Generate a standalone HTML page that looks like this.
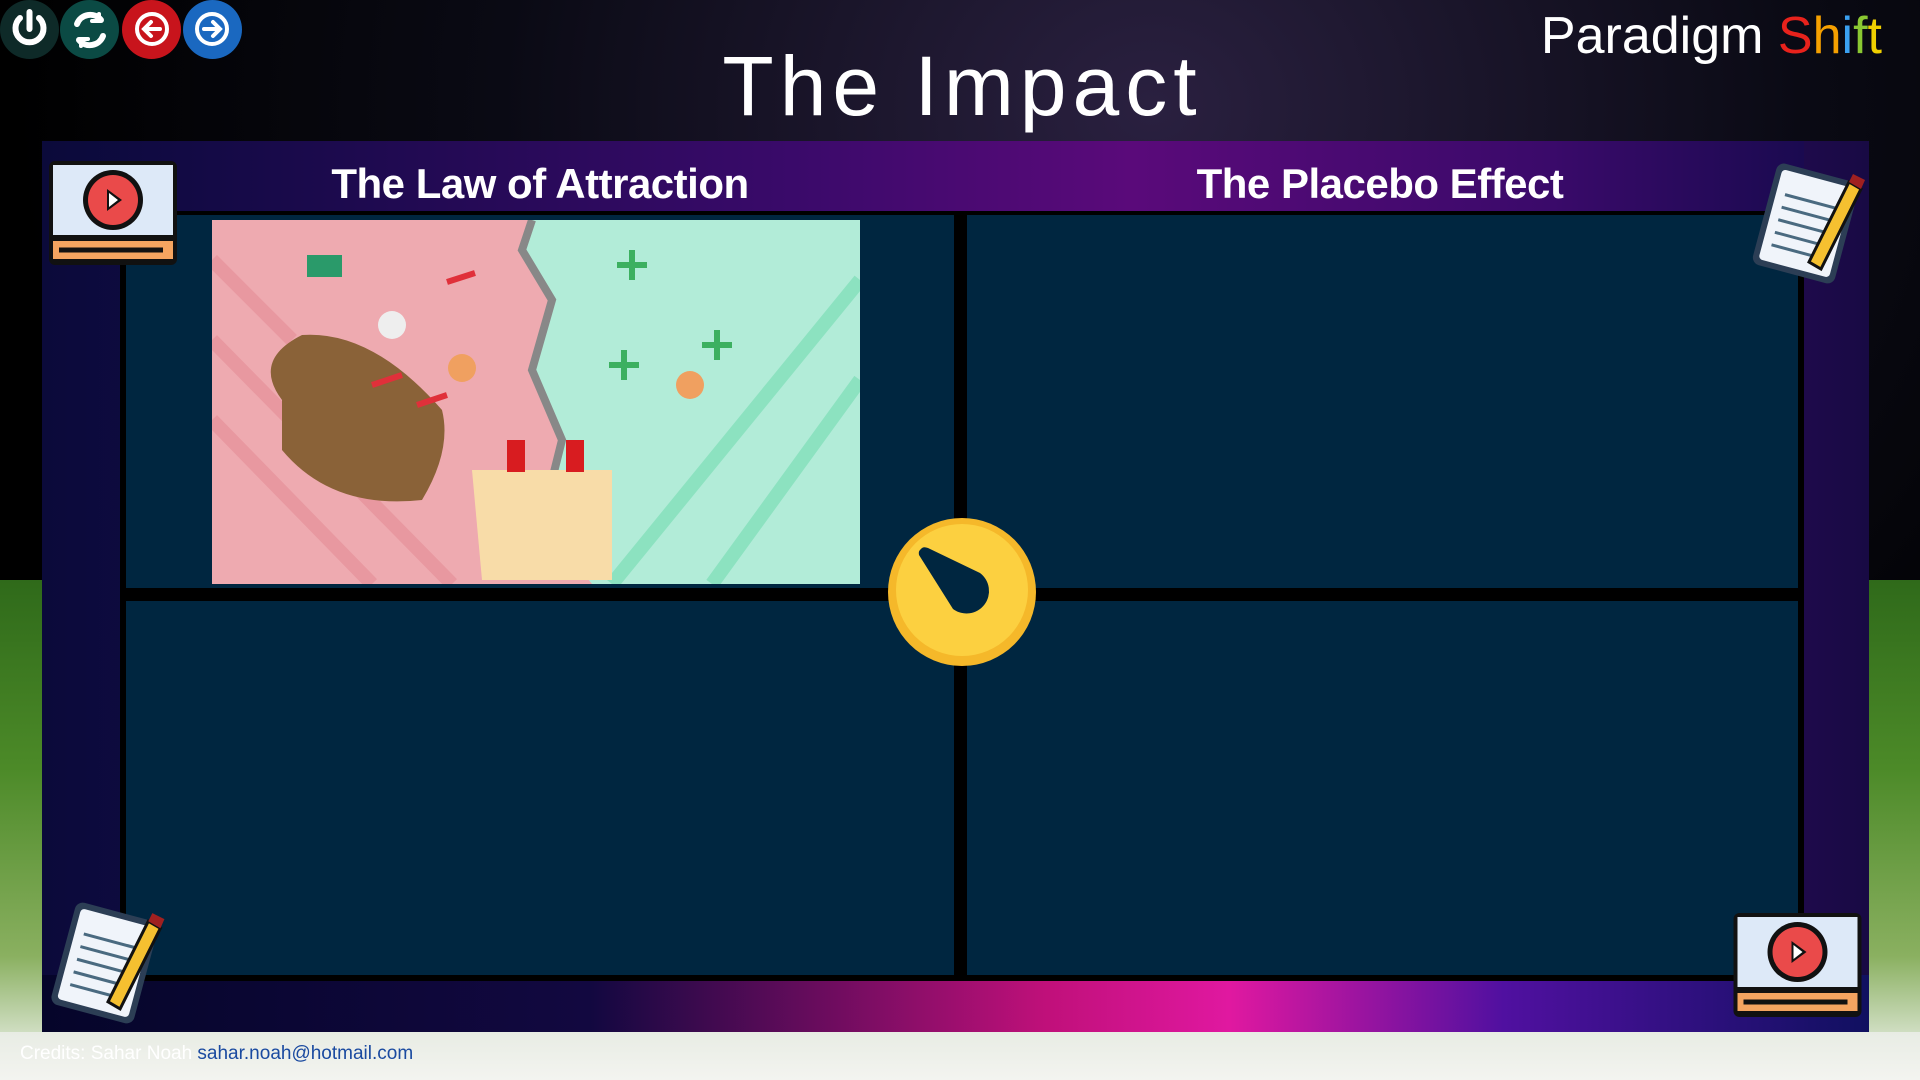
<!DOCTYPE html>
<html><head><meta charset="utf-8"><style>
*{margin:0;padding:0;box-sizing:border-box}
body{width:1920px;height:1080px;overflow:hidden;position:relative;font-family:"Liberation Sans",sans-serif;
background:radial-gradient(ellipse at 60% 10%,#2a2040 0%,#0a0a14 40%,#000 70%);}
.abs{position:absolute}
.grass{position:absolute;top:580px;height:470px;background:linear-gradient(180deg,#2f6a1a,#4c8a28 40%,#8ab060 80%,#dfe8d8)}
.bottom{position:absolute;left:0;top:1032px;width:1920px;height:48px;background:linear-gradient(180deg,#e8ece4,#f3f4f0)}
.frame{left:42px;top:141px;width:1827px;height:891px;background:linear-gradient(90deg,#0b0a3a 0%,#1a0f5a 30%,#4a0c78 55%,#3a0a6a 80%,#180a44 100%)}
.floor{left:42px;top:975px;width:1827px;height:57px;background:linear-gradient(90deg,#05052a 0%,#120840 30%,#c0107a 55%,#e018a0 65%,#5010a0 80%,#101060 100%)}
.blk{background:#000}
.panel{background:#002640}
h2{position:absolute;color:#fff;font-weight:bold;font-size:42px;top:160px;text-align:center;width:700px;letter-spacing:-0.5px}
.btn{position:absolute;top:0;width:59px;height:59px;border-radius:50%}
</style></head><body>
<div class="grass" style="left:0;width:60px"></div>
<div class="grass" style="left:1860px;width:60px"></div>
<div class="bottom"></div>
<div class="abs frame"></div>
<div class="abs floor"></div>
<div class="abs blk" style="left:120px;top:210px;width:1684px;height:771px"></div>
<div class="abs panel" style="left:126px;top:215px;width:828px;height:373px"></div>
<div class="abs panel" style="left:967px;top:215px;width:831px;height:373px"></div>
<div class="abs panel" style="left:126px;top:601px;width:828px;height:374px"></div>
<div class="abs panel" style="left:967px;top:601px;width:831px;height:374px"></div>
<div class="abs" style="left:120px;top:141px;width:1684px;height:70px;background:linear-gradient(90deg,#0e0a40,#3a0a6a 40%,#5a0a7a 60%,#3a0a6a 85%,#1a0a50)"></div>
<h2 style="left:190px">The Law of Attraction</h2>
<h2 style="left:1030px">The Placebo Effect</h2>
<div class="abs" style="left:0;top:38px;width:1920px;text-align:center;color:#fff;font-size:84px;letter-spacing:6px;padding-left:5px">The Impact</div>
<div class="abs" style="right:38px;top:6px;font-size:52px;color:#fff">Paradigm <span style="color:#e8221c">S</span><span style="color:#f5a000">h</span><span style="color:#3aa0f0">i</span><span style="color:#8ac832">f</span><span style="color:#f0d000">t</span></div>
<div class="btn" style="left:0;background:#0e2a28"></div>
<div class="btn" style="left:60px;background:#0b4a44"></div>
<div class="btn" style="left:122px;background:#c8141c"></div>
<div class="btn" style="left:183px;background:#1a68c0"></div>
<svg class="abs" style="left:0;top:0" width="250" height="60" fill="none" stroke="#fff" stroke-width="6" stroke-linecap="round">
<path d="M20 18a14 14 0 1 0 19 0M29.5 12v17"/>
<path d="M77 24a14 14 0 0 1 24-4M103 36a14 14 0 0 1-24 4" /><path d="M99 14v7h-7M81 46v-7h7" stroke-width="4"/>
<circle cx="152" cy="29" r="15" stroke-width="4"/><path d="M160 29h-15M151 22l-7 7 7 7" stroke-width="4"/>
<circle cx="212" cy="29" r="15" stroke-width="4"/><path d="M204 29h15M213 22l7 7-7 7" stroke-width="4"/>
</svg>
<svg class="abs" style="left:212px;top:220px" width="648" height="364" viewBox="0 0 648 364">
<rect width="648" height="364" fill="#eeaab0"/>
<path d="M320 0H648V364H380L330 300 350 220 320 150 340 80 310 30Z" fill="#b2ecd8"/>
<path d="M320 0L310 30 340 80 320 150 350 220 330 300" stroke="#888" stroke-width="8" fill="none"/>
<g stroke="#e898a0" stroke-width="14"><path d="M0 200L160 364M0 120L240 364M0 40L80 120"/></g>
<g stroke="#8ce2c0" stroke-width="14"><path d="M648 60L400 364M648 160L500 364"/></g>
<path d="M70 180Q40 140 90 115 160 110 230 190 240 230 210 280 120 290 70 230Z" fill="#8a6238"/>
<path d="M260 250H400V360H270Z" fill="#f8dca8"/>
<rect x="295" y="220" width="18" height="32" fill="#d81c20"/><rect x="354" y="220" width="18" height="32" fill="#d81c20"/>
<g stroke="#e0303a" stroke-width="6"><path d="M235 62l28-9M160 165l30-10M205 185l30-10"/></g>
<g stroke="#3cb060" stroke-width="6"><path d="M420 30v30M405 45h30M412 130v30M397 145h30M505 110v30M490 125h30"/></g>
<circle cx="250" cy="148" r="14" fill="#f0a060"/><circle cx="478" cy="165" r="14" fill="#f0a060"/>
<circle cx="180" cy="105" r="14" fill="#eee"/>
<rect x="95" y="35" width="35" height="22" fill="#2a9a6a"/>
</svg>
<svg class="abs" style="left:885px;top:515px" width="154" height="154" viewBox="0 0 154 154">
<circle cx="77" cy="77" r="74" fill="#f5b82a"/><circle cx="77" cy="75" r="66" fill="#fcd040"/>
<path d="M36 34Q38 31 43 33L95 58A20 20 0 1 1 68 94L34 40Q33 36 36 34Z" fill="#002640"/>
</svg>
<svg class="abs" style="left:49px;top:159px" width="130" height="106" viewBox="0 0 130 106">
<rect x="0" y="2" width="128" height="104" rx="6" fill="#111"/>
<rect x="4" y="6" width="120" height="70" fill="#dde9f8"/>
<rect x="4" y="82" width="120" height="18" fill="#f4a460"/><path d="M10 91h104" stroke="#111" stroke-width="5"/>
<circle cx="64" cy="41" r="30" fill="#111"/><circle cx="64" cy="41" r="25" fill="#ea4a4a"/><path d="M58 30v22l15-11z" fill="#111"/><path d="M60 34v14l9-7z" fill="#fff"/>
</svg>
<svg class="abs" style="left:1731px;top:911px" width="135" height="106" viewBox="0 0 130 106">
<rect x="0" y="2" width="128" height="104" rx="6" fill="#111"/>
<rect x="4" y="6" width="120" height="70" fill="#dde9f8"/>
<rect x="4" y="82" width="120" height="18" fill="#f4a460"/><path d="M10 91h104" stroke="#111" stroke-width="5"/>
<circle cx="64" cy="41" r="30" fill="#111"/><circle cx="64" cy="41" r="25" fill="#ea4a4a"/><path d="M58 30v22l15-11z" fill="#111"/><path d="M60 34v14l9-7z" fill="#fff"/>
</svg>
<svg class="abs" style="left:1749px;top:157px" width="122" height="127" viewBox="0 0 122 127">
<g transform="rotate(15 61 64)"><rect x="15" y="15" width="85" height="105" rx="8" fill="#2c3e55"/><rect x="21" y="21" width="73" height="93" rx="4" fill="#f0f4fa"/>
<g stroke="#4a6a80" stroke-width="3"><path d="M30 45h55M30 58h55M30 71h55M30 84h55M30 97h55"/></g></g>
<path d="M60 105L100 25 112 32 72 112Z" fill="#f5c030" stroke="#111" stroke-width="3"/><path d="M100 25l4-8 12 6-4 9z" fill="#a02020"/>
</svg>
<svg class="abs" style="left:47px;top:896px" width="124" height="128" viewBox="0 0 122 127">
<g transform="rotate(15 61 64)"><rect x="15" y="15" width="85" height="105" rx="8" fill="#2c3e55"/><rect x="21" y="21" width="73" height="93" rx="4" fill="#f0f4fa"/>
<g stroke="#4a6a80" stroke-width="3"><path d="M30 45h55M30 58h55M30 71h55M30 84h55M30 97h55"/></g></g>
<path d="M60 105L100 25 112 32 72 112Z" fill="#f5c030" stroke="#111" stroke-width="3"/><path d="M100 25l4-8 12 6-4 9z" fill="#a02020"/>
</svg>
<div class="abs" style="left:20px;top:1043px;font-size:19px;color:#fff">Credits: Sahar Noah <span style="color:#1a4aa0">sahar.noah@hotmail.com</span></div>
</body></html>
